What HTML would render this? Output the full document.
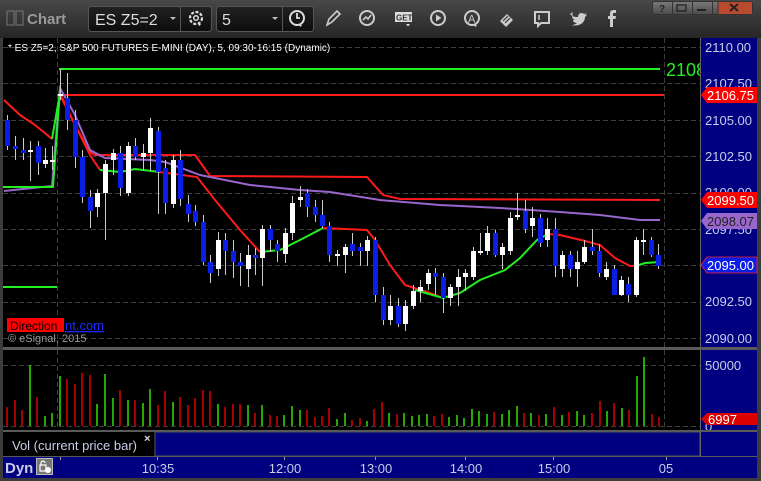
<!DOCTYPE html>
<html><head><meta charset="utf-8"><style>
html,body{margin:0;padding:0;background:#3c3c3c;}
body{width:761px;height:481px;overflow:hidden;position:relative;font-family:"Liberation Sans",sans-serif;}
</style></head><body>
<svg width="761" height="481" viewBox="0 0 761 481" xmlns="http://www.w3.org/2000/svg" style="position:absolute;left:0;top:0" font-family="Liberation Sans, sans-serif">
<defs>
<linearGradient id="tb" x1="0" y1="0" x2="0" y2="1"><stop offset="0" stop-color="#484848"/><stop offset="1" stop-color="#262626"/></linearGradient>
<linearGradient id="bx" x1="0" y1="0" x2="0" y2="1"><stop offset="0" stop-color="#222"/><stop offset="1" stop-color="#0c0c0c"/></linearGradient>
<linearGradient id="wb" x1="0" y1="0" x2="0" y2="1"><stop offset="0" stop-color="#7a7a7a"/><stop offset="1" stop-color="#4a4a4a"/></linearGradient>
<clipPath id="plot"><rect x="3" y="38" width="697" height="309"/></clipPath>
</defs>
<rect x="0" y="0" width="761" height="481" fill="#3c3c3c"/>
<rect x="0" y="0" width="761" height="38" fill="url(#tb)"/>
<!-- toolbar -->
<rect x="7" y="11" width="7" height="14" fill="none" stroke="#777" stroke-width="1"/>
<rect x="16" y="11" width="7" height="14" fill="none" stroke="#777" stroke-width="1"/>
<text x="27" y="24" font-size="15" font-weight="bold" fill="#9a9a9a">Chart</text>
<rect x="88.5" y="6.5" width="123" height="25" rx="3" fill="url(#bx)" stroke="#555"/>
<line x1="180.5" y1="7" x2="180.5" y2="31" stroke="#555"/>
<text x="95" y="25" font-size="16" fill="#ddd">ES Z5=2</text>
<path d="M170 17 l3 3 3-3z" fill="#bbb"/>
<circle cx="196" cy="18" r="6" fill="none" stroke="#ddd" stroke-width="2.2" stroke-dasharray="3 1.6"/>
<circle cx="196" cy="18" r="2.3" fill="none" stroke="#ddd" stroke-width="1.5"/>
<path d="M198 24 l3 0 -1.5 2z" fill="#ddd"/>
<rect x="216.5" y="6.5" width="97" height="25" rx="3" fill="url(#bx)" stroke="#555"/>
<line x1="282.5" y1="7" x2="282.5" y2="31" stroke="#555"/>
<text x="222" y="25" font-size="16" fill="#ddd">5</text>
<path d="M272 17 l3 3 3-3z" fill="#bbb"/>
<circle cx="297" cy="18" r="7" fill="none" stroke="#ddd" stroke-width="2"/>
<path d="M297 13 v5 h3" fill="none" stroke="#ddd" stroke-width="1.8"/>
<path d="M299 25 l3 0 -1.5 2z" fill="#ddd"/>
<path d="M327 25 l2-6 8-8 3 3 -8 8z" fill="none" stroke="#ccc" stroke-width="1.6"/>
<circle cx="367" cy="18" r="7" fill="none" stroke="#ccc" stroke-width="2"/>
<path d="M363 20 l3-3 2 2 3-4" fill="none" stroke="#ccc" stroke-width="1.6"/>
<rect x="395" y="12" width="17" height="10" fill="#ddd"/>
<text x="396" y="20.5" font-size="8" font-weight="bold" fill="#333">GET</text>
<path d="M406 24 l4 0 -2 2.5z" fill="#ddd"/>
<circle cx="438" cy="18" r="7" fill="none" stroke="#ccc" stroke-width="2"/>
<path d="M436 14.5 v7 l5.5-3.5z" fill="#ccc"/>
<circle cx="472" cy="18" r="7" fill="none" stroke="#ccc" stroke-width="2"/>
<text x="468" y="22.5" font-size="11" fill="#ccc">A</text>
<path d="M474 25 l3 0 -1.5 2z" fill="#ddd"/>
<path d="M500 21 l7-7 6 6 -7 7z" fill="#ccc"/>
<path d="M503 21 l5-5 M505 23 l5-5" stroke="#333" stroke-width="1.2"/>
<path d="M535 12 h14 v11 h-8 l-3 3 v-3 h-3z" fill="none" stroke="#ccc" stroke-width="2"/>
<line x1="539" y1="15" x2="539" y2="20" stroke="#ccc" stroke-width="1.5"/>
<path d="M570 14 c2 2 4 3 8 3 c0-4 4-5 6-3 l3-1 -2 2 2 0 -2 2 c0 6-6 10-14 8 c3 0 5-1 6-2 c-2 0-4-1-4-3 h2 c-2-1-3-2-3-4 l2 1 c-2-2-2-3-1-5z" fill="#ccc"/>
<path d="M610 27 v-8 h-2 v-3 h2 v-2 c0-3 1-4 4-4 h2 v3 h-2 c-1 0-1 0-1 1 v2 h3 l-0.5 3 h-2.5 v8z" fill="#ccc"/>
<!-- window buttons -->
<rect x="652.5" y="1.5" width="100" height="13" rx="2" fill="url(#wb)" stroke="#333"/>
<rect x="718" y="2" width="34" height="12" fill="#b84a30"/>
<line x1="672.5" y1="2" x2="672.5" y2="14" stroke="#333"/><line x1="692.5" y1="2" x2="692.5" y2="14" stroke="#333"/><line x1="712.5" y1="2" x2="712.5" y2="14" stroke="#333"/><line x1="718" y1="2" x2="718" y2="14" stroke="#333"/>
<text x="659" y="12" font-size="10" font-weight="bold" fill="#222">?</text>
<rect x="677" y="5" width="9" height="6" fill="none" stroke="#222" stroke-width="1.3"/>
<rect x="697" y="9" width="9" height="2" fill="#222"/>
<path d="M730 4 l8 7 M738 4 l-8 7" stroke="#222" stroke-width="2"/>
<!-- main chart area -->
<rect x="3" y="38" width="697" height="309" fill="#000"/>
<rect x="700" y="38" width="57" height="440" fill="#000080"/>
<line x1="700.5" y1="38" x2="700.5" y2="348" stroke="#666"/>
<g stroke="#3e3e3e" stroke-dasharray="5 3" stroke-width="1">
<line x1="3" y1="47.5" x2="700" y2="47.5"/><line x1="3" y1="83.5" x2="700" y2="83.5"/><line x1="3" y1="120.5" x2="700" y2="120.5"/><line x1="3" y1="156.5" x2="700" y2="156.5"/><line x1="3" y1="193.5" x2="700" y2="193.5"/><line x1="3" y1="229.5" x2="700" y2="229.5"/><line x1="3" y1="265.5" x2="700" y2="265.5"/><line x1="3" y1="302.5" x2="700" y2="302.5"/><line x1="3" y1="338.5" x2="700" y2="338.5"/>
<line x1="57.5" y1="38" x2="57.5" y2="347"/><line x1="664.5" y1="38" x2="664.5" y2="347"/>
</g>
<text x="8" y="51" font-size="10" fill="#fff">* ES Z5=2, S&amp;P 500 FUTURES E-MINI (DAY), 5, 09:30-16:15 (Dynamic)</text>
<!-- levels -->
<line x1="59" y1="69" x2="660" y2="69" stroke="#22ee22" stroke-width="2"/>
<line x1="57" y1="95" x2="664" y2="95" stroke="#ff1a1a" stroke-width="2"/>
<line x1="3" y1="287" x2="57" y2="287" stroke="#22ee22" stroke-width="2"/>
<g clip-path="url(#plot)"><text x="666" y="76" font-size="18" fill="#22ee22">2108</text></g>
<!-- step line -->
<polyline points="60,95 75,125 90,152 95,155 195,155 210,176 367,177 383,195 400,199 660,200" fill="none" stroke="#ff1a1a" stroke-width="2"/>
<!-- purple -->
<polyline points="4,191 52,186 60,88 75,115 90,150 105,158 150,160 165,162 200,175 250,185 300,190 330,192 380,200 440,205 500,208 560,212 600,215 640,220 660,220" fill="none" stroke="#9966cc" stroke-width="2"/>
<polyline points="3,187 53,187 60,90" fill="none" stroke="#22ee22" stroke-width="2"/>
<!-- EMA -->
<polyline points="4,100 20,115 35,125 52,139" fill="none" stroke="#ff1a1a" stroke-width="2"/>
<polyline points="52,139 60,93" fill="none" stroke="#22ee22" stroke-width="2"/>
<polyline points="60,93 75,125 90,155 100,170" fill="none" stroke="#ff1a1a" stroke-width="2"/>
<polyline points="100,170 120,172 135,169 160,172" fill="none" stroke="#22ee22" stroke-width="2"/>
<polyline points="160,172 197,177 215,200 240,230 260,252" fill="none" stroke="#ff1a1a" stroke-width="2"/>
<polyline points="260,252 280,250 300,240 323,228" fill="none" stroke="#22ee22" stroke-width="2"/>
<polyline points="323,228 367,230 375,240 390,265 405,285 430,293 443,298" fill="none" stroke="#ff1a1a" stroke-width="2"/>
<polyline points="415,290 443,298 460,293 480,280 505,270 520,258 537,240 548,234" fill="none" stroke="#22ee22" stroke-width="2"/>
<polyline points="548,234 560,235 585,241 600,245 615,258 630,266 636,266" fill="none" stroke="#ff1a1a" stroke-width="2"/>
<polyline points="636,266 645,263 660,262" fill="none" stroke="#22ee22" stroke-width="2"/>
<!-- wicks -->
<path stroke="#cccccc" stroke-width="1" fill="none" d="M7.5 115V150M15.5 136V160M23.5 138V160M30.5 141V181M38.5 141V175M45.5 148V168M52.5 146V170M60.5 69V100M67.5 73V130M75.5 110V168M82.5 150V203M90.5 190V228M97.5 189V217M105.5 160V240M113.5 149V175M120.5 146V196M128.5 142V196M135.5 138V160M143.5 144V171M150.5 118V171M158.5 127V214M165.5 160V214M173.5 155V208M180.5 150V206M188.5 195V222M195.5 205V226M203.5 215V265M210.5 255V283M218.5 232V276M225.5 233V275M233.5 240V278M240.5 253V286M248.5 245V287M255.5 248V275M262.5 225V286M270.5 225V252M277.5 240V262M285.5 228V263M292.5 196V240M300.5 186V207M307.5 189V217M315.5 200V222M322.5 200V228M329.5 222V262M337.5 250V266M345.5 244V273M352.5 233V256M360.5 243V266M367.5 236V266M375.5 237V302M383.5 287V325M390.5 295V325M398.5 298V327M405.5 300V331M413.5 285V309M420.5 280V302M428.5 269V290M435.5 268V295M443.5 273V313M450.5 284V306M458.5 269V306M465.5 269V291M473.5 247V280M480.5 233V255M487.5 226V255M495.5 230V257M502.5 243V269M510.5 212V255M517.5 193V220M525.5 200V233M532.5 207V237M540.5 214V247M547.5 218V247M555.5 218V277M562.5 251V277M570.5 251V277M577.5 251V287M584.5 240V264M592.5 229V255M599.5 244V277M606.5 262V280M614.5 265V295M621.5 276V296M628.5 277V302M636.5 237V297M643.5 229V255M651.5 237V257M658.5 244V269"/>
<g fill="#0a1ee8">
<rect x="5" y="120" width="5" height="26"/><rect x="13" y="146" width="5" height="3"/><rect x="21" y="150" width="5" height="3"/><rect x="36" y="146" width="5" height="17"/>
<rect x="65" y="98" width="5" height="22"/><rect x="73" y="120" width="5" height="37"/><rect x="80" y="157" width="5" height="40"/><rect x="88" y="197" width="5" height="14"/>
<rect x="118" y="153" width="5" height="35"/><rect x="133" y="146" width="5" height="11"/><rect x="156" y="131" width="5" height="41"/><rect x="163" y="168" width="5" height="35"/><rect x="178" y="160" width="5" height="39"/>
<rect x="186" y="204" width="5" height="10"/><rect x="193" y="211" width="5" height="11"/><rect x="201" y="222" width="5" height="40"/><rect x="208" y="262" width="5" height="11"/><rect x="223" y="240" width="5" height="11"/><rect x="231" y="251" width="5" height="11"/><rect x="238" y="262" width="5" height="4"/><rect x="253" y="255" width="5" height="3"/><rect x="268" y="229" width="5" height="11"/><rect x="275" y="244" width="5" height="7"/>
<rect x="305" y="193" width="5" height="14"/><rect x="313" y="207" width="5" height="8"/><rect x="320" y="215" width="5" height="11"/><rect x="327" y="226" width="5" height="29"/><rect x="350" y="244" width="5" height="7"/><rect x="358" y="247" width="5" height="4"/><rect x="373" y="240" width="5" height="55"/><rect x="381" y="295" width="5" height="25"/><rect x="396" y="306" width="5" height="18"/><rect x="433" y="273" width="5" height="4"/><rect x="441" y="277" width="5" height="21"/>
<rect x="493" y="233" width="5" height="22"/><rect x="523" y="211" width="5" height="18"/><rect x="538" y="218" width="5" height="25"/><rect x="553" y="229" width="5" height="37"/><rect x="568" y="255" width="5" height="14"/><rect x="590" y="247" width="5" height="4"/><rect x="597" y="251" width="5" height="22"/><rect x="612" y="269" width="5" height="26"/><rect x="626" y="284" width="5" height="11"/><rect x="649" y="240" width="5" height="15"/><rect x="656" y="255" width="5" height="11"/>
</g>
<g fill="#ffffff">
<rect x="28" y="150" width="5" height="2"/><rect x="43" y="160" width="5" height="4"/><rect x="50" y="160" width="5" height="2"/><rect x="58" y="94" width="5" height="2"/>
<rect x="95" y="193" width="5" height="14"/><rect x="103" y="164" width="5" height="29"/><rect x="111" y="153" width="5" height="7"/><rect x="126" y="146" width="5" height="47"/><rect x="141" y="153" width="5" height="4"/><rect x="148" y="128" width="5" height="25"/><rect x="171" y="160" width="5" height="44"/>
<rect x="216" y="240" width="5" height="29"/><rect x="246" y="255" width="5" height="14"/><rect x="260" y="229" width="5" height="29"/><rect x="283" y="233" width="5" height="21"/><rect x="290" y="203" width="5" height="30"/><rect x="298" y="197" width="5" height="3"/>
<rect x="335" y="254" width="5" height="2"/><rect x="343" y="247" width="5" height="8"/><rect x="365" y="240" width="5" height="11"/><rect x="388" y="306" width="5" height="14"/><rect x="403" y="306" width="5" height="18"/><rect x="411" y="291" width="5" height="15"/><rect x="418" y="287" width="5" height="4"/><rect x="426" y="273" width="5" height="11"/>
<rect x="448" y="287" width="5" height="11"/><rect x="456" y="277" width="5" height="10"/><rect x="463" y="273" width="5" height="4"/><rect x="471" y="251" width="5" height="26"/><rect x="478" y="251" width="5" height="2"/><rect x="485" y="233" width="5" height="18"/><rect x="500" y="247" width="5" height="8"/><rect x="508" y="218" width="5" height="33"/><rect x="515" y="215" width="5" height="2"/><rect x="530" y="218" width="5" height="8"/><rect x="545" y="229" width="5" height="11"/>
<rect x="560" y="255" width="5" height="14"/><rect x="575" y="262" width="5" height="7"/><rect x="582" y="247" width="5" height="15"/><rect x="604" y="269" width="5" height="8"/><rect x="619" y="280" width="5" height="15"/><rect x="634" y="240" width="5" height="55"/><rect x="641" y="240" width="5" height="2"/>
</g>
<!-- logo -->
<rect x="7" y="318" width="57" height="14" fill="#ff0000"/>
<text x="10" y="330" font-size="12" fill="#000">Direction</text>
<text x="65" y="330" font-size="13" fill="#1a2aff" text-decoration="underline">nt.com</text>
<text x="8" y="342" font-size="11" fill="#999">© eSignal, 2015</text>
<!-- price axis labels -->
<g font-size="13" fill="#c8cde8">
<text x="705" y="52">2110.00</text><text x="705" y="88">2107.50</text><text x="705" y="125">2105.00</text><text x="705" y="161">2102.50</text><text x="705" y="197">2100.00</text><text x="705" y="234">2097.50</text><text x="705" y="306">2092.50</text><text x="705" y="343">2090.00</text>
</g>
<path d="M701 95 l6-8 h50 v16 h-50z" fill="#ff0000"/><text x="707" y="100" font-size="13" fill="#fff">2106.75</text>
<path d="M701 200 l6-8 h50 v16 h-50z" fill="#ff0000"/><text x="707" y="205" font-size="13" fill="#fff">2099.50</text>
<path d="M701 221 l6-8 h50 v16 h-50z" fill="#9966cc"/><text x="707" y="226" font-size="13" fill="#222">2098.07</text>
<path d="M701 265 l6-8 h50 v16 h-50z" fill="#0a1ee8" stroke="#ff2020" stroke-width="0.8"/><text x="707" y="270" font-size="13" fill="#fff">2095.00</text>
<!-- volume pane -->
<rect x="3" y="347" width="697" height="3" fill="#5a5a5a"/>
<rect x="3" y="350" width="697" height="80" fill="#000"/>
<rect x="700" y="347" width="57" height="3" fill="#5a5a5a"/>
<line x1="700.5" y1="350" x2="700.5" y2="431" stroke="#666"/>
<g stroke="#3e3e3e" stroke-dasharray="5 3"><line x1="3" y1="365.5" x2="700" y2="365.5"/><line x1="3" y1="426.5" x2="700" y2="426.5"/><line x1="57.5" y1="350" x2="57.5" y2="430"/><line x1="664.5" y1="350" x2="664.5" y2="430"/></g>
<path stroke="#33dd00" stroke-width="1.5" d="M30 365V426M45 416V426M52 413V426M60 376V426M97 404V426M105 374V426M113 398V426M128 400V426M143 403V426M150 389V426M173 402V426M218 404V426M248 405V426M262 405V426M284 415V426M292 406V426M300 410V426M337 419V426M345 413V426M367 421V426M389 413V426M404 413V426M412 416V426M419 415V426M427 414V426M449 417V426M457 415V426M464 418V426M472 409V426M479 411V426M487 414V426M502 414V426M509 410V426M517 406V426M531 413V426M546 414V426M562 415V426M577 411V426M584 415V426M607 411V426M622 408V426M637 376V426M644 357V426"/>
<path stroke="#e00000" stroke-width="1.5" d="M7 407V426M15 400V426M22 410V426M37 397V426M67 379V426M75 384V426M82 373V426M90 375V426M120 390V426M135 400V426M158 405V426M165 391V426M180 397V426M188 405V426M195 398V426M203 390V426M210 391V426M225 407V426M233 404V426M240 404V426M255 413V426M270 415V426M277 416V426M307 410V426M315 417V426M322 416V426M329 408V426M352 420V426M360 418V426M374 409V426M382 402V426M397 414V426M434 416V426M442 414V426M494 412V426M524 413V426M539 415V426M554 407V426M569 412V426M592 413V426M600 401V426M614 403V426M629 410V426M652 414V426M659 417V426"/>
<text x="705" y="370" font-size="13" fill="#c8cde8">50000</text>
<text x="705" y="431" font-size="13" fill="#c8cde8">0</text>
<path d="M701 419 l6-6 h50 v12 h-50z" fill="#dd0000"/><text x="708" y="424" font-size="13" fill="#fff">6997</text>
<!-- vol label row -->
<rect x="3" y="430" width="754" height="2" fill="#5a5a5a"/>
<rect x="3" y="432" width="152" height="24" fill="#000"/>
<rect x="155" y="432" width="545" height="24" fill="#000080" stroke="#5a5a5a" stroke-width="1"/>
<line x1="700.5" y1="432" x2="700.5" y2="456" stroke="#666"/>
<text x="12" y="450" font-size="13" fill="#c8cde8">Vol (current price bar)</text>
<text x="144" y="442" font-size="11" font-weight="bold" fill="#ddd">×</text>
<!-- time axis -->
<rect x="3" y="456" width="754" height="22" fill="#000080"/>
<line x1="3" y1="456.5" x2="757" y2="456.5" stroke="#5a5a5a"/>
<g stroke="#999"><line x1="60.5" y1="457" x2="60.5" y2="460"/><line x1="157.5" y1="457" x2="157.5" y2="460"/><line x1="284.5" y1="457" x2="284.5" y2="460"/><line x1="375.5" y1="457" x2="375.5" y2="460"/><line x1="465.5" y1="457" x2="465.5" y2="460"/><line x1="553.5" y1="457" x2="553.5" y2="460"/><line x1="666.5" y1="457" x2="666.5" y2="460"/></g>
<g font-size="13" fill="#c8cde8" text-anchor="middle"><text x="158" y="473">10:35</text><text x="285" y="473">12:00</text><text x="376" y="473">13:00</text><text x="466" y="473">14:00</text><text x="554" y="473">15:00</text><text x="666" y="473">05</text></g>
<text x="5" y="473" font-size="15" font-weight="bold" fill="#c8cde8">Dyn</text>
<rect x="36.5" y="458.5" width="16" height="16" fill="#777" stroke="#bbb"/>
<path d="M40 471 v-6 h6 v6z M41 465 v-2 a2 2 0 0 1 4 0" fill="none" stroke="#fff" stroke-width="1.2"/>
<circle cx="48" cy="470" r="3" fill="#fff"/>
<rect x="3" y="478" width="754" height="3" fill="#3c3c3c"/>
</svg>
</body></html>
